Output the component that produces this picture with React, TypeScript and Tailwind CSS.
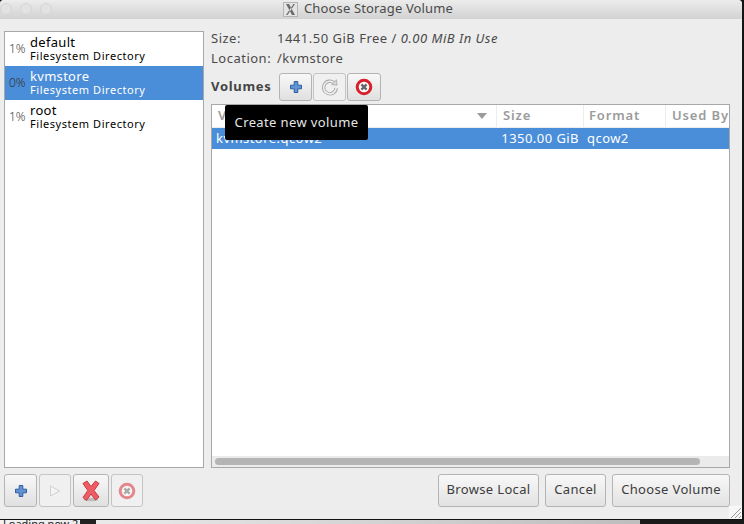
const pools = [
  { pct: '1%', name: 'default', type: 'Filesystem Directory', selected: false },
  { pct: '0%', name: 'kvmstore', type: 'Filesystem Directory', selected: true },
  { pct: '1%', name: 'root', type: 'Filesystem Directory', selected: false },
]

function PlusIcon() {
  return (
    <svg width="16" height="16" viewBox="0 0 16 16">
      <path
        d="M6.2 2.5h3.6v3.7h3.7v3.6H9.8v3.7H6.2V9.8H2.5V6.2h3.7z"
        fill="#5f93d3"
        stroke="#2f5f9e"
        strokeWidth="1"
      />
    </svg>
  )
}

function RefreshIcon() {
  return (
    <svg width="18" height="18" viewBox="0 0 18 18" fill="none">
      <path
        d="M13.5 5.2A6.3 6.3 0 1 0 15.2 10"
        stroke="#a8a8a8"
        strokeWidth="3.4"
      />
      <path
        d="M13.5 5.2A6.3 6.3 0 1 0 15.2 10"
        stroke="#efefef"
        strokeWidth="1.6"
      />
      <path d="M10.5 6.6l5.6.6-.6-5.4z" fill="#d8d8d8" stroke="#a8a8a8" strokeWidth="0.8" />
    </svg>
  )
}

function StopIcon({ dim }: { dim?: boolean }) {
  return (
    <svg width="18" height="18" viewBox="0 0 18 18" className={dim ? 'opacity-50' : ''}>
      <circle cx="9" cy="9" r="6.8" fill="#fff" stroke="#d9202a" strokeWidth="3" />
      <path d="M6.4 6.4l5.2 5.2M11.6 6.4l-5.2 5.2" stroke="#666" strokeWidth="2.4" />
    </svg>
  )
}

function PlayIcon() {
  return (
    <svg width="16" height="16" viewBox="0 0 16 16">
      <path d="M3.5 3l9 5-9 5z" fill="#f4f4f4" stroke="#d0d0d0" strokeWidth="1" />
    </svg>
  )
}

function DeleteIcon() {
  return (
    <svg width="22" height="24" viewBox="0 0 22 24">
      <ellipse cx="11" cy="20.5" rx="7.5" ry="1.8" fill="#bdbdbd" />
      <path
        d="M3 4.5L7 2l4 5.5L15.5 2l3.5 2.5-5 7 5 6.5-3.5 3L11 15l-4.5 6.5L3 18.5l4.8-7z"
        fill="#ee5c66"
        stroke="#c93a44"
        strokeWidth="1"
      />
    </svg>
  )
}

function XLogo() {
  return (
    <svg width="15" height="15" viewBox="0 0 15 15">
      <rect x="0.5" y="0.5" width="14" height="14" fill="#e4e4e4" stroke="#b5b5b5" />
      <path d="M3 2h3l6 11H9zM12 2h-1.5L3 13h1.5z" fill="#6b6b6b" />
    </svg>
  )
}

function IconButton({
  width,
  disabled,
  children,
}: {
  width: string
  disabled?: boolean
  children: React.ReactNode
}) {
  return (
    <div
      className={`${width} h-full flex items-center justify-center rounded-[3px] border ${
        disabled
          ? 'border-[#c4c4c4] bg-[#f0f0f0]'
          : 'border-[#b4b4b4] bg-gradient-to-b from-[#f8f8f8] to-[#e0e0e0]'
      }`}
    >
      {children}
    </div>
  )
}

function TextButton({ width, label }: { width: string; label: string }) {
  return (
    <div
      className={`${width} h-[33px] pb-[2px] flex items-center justify-center rounded-[3px] border border-[#b4b4b4] bg-gradient-to-b from-[#f8f8f8] to-[#e2e2e2] text-[13px] tracking-[0.35px] text-[#3c3c3c]`}
    >
      {label}
    </div>
  )
}

export default function App() {
  return (
    <div
      className="w-[744px] h-[524px] flex flex-col overflow-hidden bg-[#151515] text-[13px]"
      style={{ fontFamily: '"Noto Sans", "Open Sans", sans-serif' }}
    >
      <div className="flex h-[519px]">
        <div className="w-[742px] flex flex-col bg-[#ededed] rounded-t-[4px] overflow-hidden">
          {/* Title bar */}
          <div className="relative h-[19px] flex items-center justify-center gap-[6px] pr-[6px] bg-gradient-to-b from-[#ececec] to-[#d2d2d2]">
            <div className="absolute left-0 top-[3px] flex gap-[8px]">
              <div className="w-[12px] h-[12px] rounded-full border border-[#d4d4d4] bg-[#e2e2e2]" />
              <div className="w-[12px] h-[12px] rounded-full border border-[#d4d4d4] bg-[#e2e2e2]" />
              <div className="w-[12px] h-[12px] rounded-full border border-[#d4d4d4] bg-[#e2e2e2]" />
            </div>
            <XLogo />
            <span className="text-[13px] text-[#4a4a4a] tracking-[0.15px] mt-[-1px]">Choose Storage Volume</span>
          </div>

          <div className="flex-1 flex flex-col relative">
            <div className="flex gap-[7px] px-[4px] pt-[12px] h-[449px]">
              {/* Pool list */}
              <div className="w-[200px] shrink-0 bg-white border border-[#a8a8a8]">
                {pools.map((pool) => (
                  <div
                    key={pool.name}
                    className={`flex items-center h-[34px] ${
                      pool.selected ? 'bg-[#4a8dd8] text-white' : 'text-black'
                    }`}
                  >
                    <span
                      className={`w-[25px] pl-[4px] text-[12px] font-light ${
                        pool.selected ? 'text-[#333]' : 'text-[#444]'
                      }`}
                    >
                      {pool.pct}
                    </span>
                    <div className="flex flex-col mb-[2px]">
                      <span className="text-[13px] leading-[15px] tracking-[0.3px]">{pool.name}</span>
                      <span className="text-[11px] leading-[12px] tracking-[0.55px]">{pool.type}</span>
                    </div>
                  </div>
                ))}
              </div>

              {/* Volume panel */}
              <div className="flex-1 flex flex-col">
                <div className="flex h-[14px] items-center text-[#4a4a4a] tracking-[0.5px] mt-[1px]">
                  <span className="w-[66px]">Size:</span>
                  <span>
                    1441.50 GiB Free / <em>0.00 MiB In Use</em>
                  </span>
                </div>
                <div className="flex h-[14px] items-center text-[#4a4a4a] tracking-[0.5px] mt-[6px]">
                  <span className="w-[66px]">Location:</span>
                  <span>/kvmstore</span>
                </div>
                <div className="flex items-center h-[28px] mt-[7px]">
                  <span className="w-[68px] font-bold text-[#444] tracking-[0.7px] whitespace-nowrap">Volumes</span>
                  <div className="flex h-full gap-[1px]">
                    <IconButton width="w-[33px]">
                      <PlusIcon />
                    </IconButton>
                    <IconButton width="w-[33px]" disabled>
                      <RefreshIcon />
                    </IconButton>
                    <IconButton width="w-[34px]">
                      <StopIcon />
                    </IconButton>
                  </div>
                </div>

                {/* Volume table */}
                <div className="relative mt-[3px] w-[519px] flex-1 flex flex-col bg-white border border-[#a8a8a8]">
                  <div className="flex h-[23px] font-semibold text-[#9b9b9b] tracking-[0.85px] border-b border-[#ededed]">
                    <div className="w-[285px] flex items-center justify-between px-[6px] border-r border-[#ededed]">
                      <span>Volumes</span>
                      <svg width="10" height="6" viewBox="0 0 10 6" className="mr-[3px]">
                        <path d="M0 0h10L5 6z" fill="#9b9b9b" />
                      </svg>
                    </div>
                    <div className="w-[87px] flex items-center px-[6px] border-r border-[#ededed]">Size</div>
                    <div className="w-[82px] flex items-center px-[5px] border-r border-[#ededed]">Format</div>
                    <div className="flex-1 flex items-center px-[6px] overflow-hidden whitespace-nowrap">Used By</div>
                  </div>
                  <div className="flex items-center h-[21px] bg-[#4a8dd8] text-white tracking-[0.45px]">
                    <span className="w-[284px] pl-[4px]">kvmstore.qcow2</span>
                    <span className="w-[87px] text-right pr-[4px] whitespace-nowrap">1350.00 GiB</span>
                    <span className="pl-[4px]">qcow2</span>
                  </div>
                  <div className="flex-1" />
                  <div className="h-[11px] flex items-center px-[3px] bg-[#ebebeb]">
                    <div className="w-[485px] h-[7px] rounded-full bg-[#b4b4b4]" />
                  </div>

                  {/* Tooltip */}
                  <div className="absolute left-[13px] top-0 w-[143px] h-[35px] flex items-center justify-center rounded-[2px] bg-black text-[#e6e6e6] text-[13px] tracking-[0.38px]">
                    Create new volume
                  </div>
                </div>
              </div>
            </div>

            {/* Bottom buttons */}
            <div className="flex justify-between pl-[4px] pr-[12px] pt-[6px]">
              <div className="flex h-[33px] gap-[2px]">
                <IconButton width="w-[33px]">
                  <PlusIcon />
                </IconButton>
                <IconButton width="w-[32px]" disabled>
                  <PlayIcon />
                </IconButton>
                <IconButton width="w-[36px]">
                  <DeleteIcon />
                </IconButton>
                <IconButton width="w-[32px]" disabled>
                  <StopIcon dim />
                </IconButton>
              </div>
              <div className="flex gap-[6px]">
                <TextButton width="w-[101px]" label="Browse Local" />
                <TextButton width="w-[61px]" label="Cancel" />
                <TextButton width="w-[118px]" label="Choose Volume" />
              </div>
            </div>

            {/* Resize grip */}
            <svg width="13" height="13" viewBox="0 0 13 13" className="absolute right-0 bottom-0">
              <rect width="13" height="13" fill="#f7f7f7" />
              <path d="M2 12L12 2M6 12l6-6M10 12l2-2" stroke="#9a9a9a" strokeWidth="1" />
            </svg>
          </div>
        </div>
        <div className="w-[2px] bg-[#141414]" />
      </div>

      {/* Desktop peeking out below the window */}
      <div className="h-[5px] flex overflow-hidden border-t border-[#111]">
        <div className="w-[640px] flex bg-gradient-to-r from-[#f2f2f2] to-[#bdbdbd] text-[#222] text-[11px] leading-[7px] pl-[3px] whitespace-nowrap">
          <span>Loading new 2</span>
          <div className="w-[16px] ml-[2px] bg-[#222]" />
        </div>
        <div className="flex-1 bg-[#1a1a1a]" />
      </div>
    </div>
  )
}
